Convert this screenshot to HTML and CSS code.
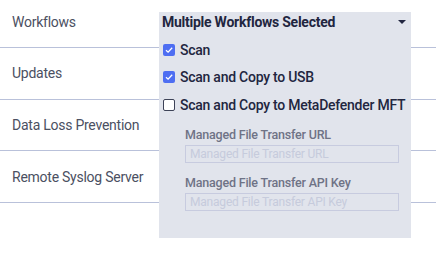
FILE: index.html
```html
<!DOCTYPE html>
<html>
<head>
<meta charset="utf-8">
<link rel="stylesheet" href="styles.css">
</head>
<body>
<div class="page">
  <div class="rows">
    <div class="row row-first">Workflows</div>
    <div class="row">Updates</div>
    <div class="row">Data Loss Prevention</div>
    <div class="row">Remote Syslog Server</div>
  </div>
  <div class="menu">
    <div class="menu-head">
      <span>Multiple Workflows Selected</span>
      <span class="caret"></span>
    </div>
    <div class="opts">
      <label class="opt"><span class="box checked"><svg viewBox="0 0 12 12" width="12" height="12"><path d="M3 6.2 L5.1 8.2 L9.2 3.8" fill="none" stroke="#fff" stroke-width="1.3"/></svg></span>Scan</label>
      <label class="opt"><span class="box checked"><svg viewBox="0 0 12 12" width="12" height="12"><path d="M3 6.2 L5.1 8.2 L9.2 3.8" fill="none" stroke="#fff" stroke-width="1.3"/></svg></span>Scan and Copy to USB</label>
      <label class="opt"><span class="box"></span>Scan and Copy to MetaDefender MFT</label>
    </div>
    <div class="fields">
      <div class="field">
        <div class="field-label">Managed File Transfer URL</div>
        <div class="input">Managed File Transfer URL</div>
      </div>
      <div class="field">
        <div class="field-label">Managed File Transfer API Key</div>
        <div class="input">Managed File Transfer API Key</div>
      </div>
    </div>
  </div>
</div>
</body>
</html>
```
FILE: styles.css
```css
html, body {
  margin: 0;
  padding: 0;
  background: #ffffff;
}
body {
  font-family: Roboto, "Noto Sans", sans-serif;
  width: 436px;
  height: 265px;
  overflow: hidden;
}
.page {
  position: relative;
  width: 436px;
  height: 265px;
}
.rows {
  display: flex;
  flex-direction: column;
}
.row {
  height: 50.7px;
  display: flex;
  align-items: center;
  padding-left: 12px;
  border-bottom: 1px solid #b9c1da;
  font-size: 14px;
  color: #4b5062;
  letter-spacing: -0.25px;
}
.row-first {
  box-sizing: border-box;
  height: 48px;
  padding-bottom: 3px;
}
.menu {
  position: absolute;
  left: 159px;
  top: 12px;
  width: 252px;
  height: 226px;
  background: #e1e4ec;
}
.menu-head {
  display: flex;
  align-items: center;
  justify-content: space-between;
  height: 20px;
  padding: 0 5px 0 3px;
  font-weight: 700;
  font-size: 14px;
  color: #222640;
  letter-spacing: -0.25px;
}
.caret {
  width: 0;
  height: 0;
  border-left: 4px solid transparent;
  border-right: 4px solid transparent;
  border-top: 4px solid #222640;
}
.opts {
  padding-top: 4px;
  display: flex;
  flex-direction: column;
}
.opt {
  display: flex;
  align-items: center;
  height: 27.5px;
  padding-left: 4px;
  gap: 5px;
  font-size: 14px;
  font-weight: 500;
  color: #222640;
  letter-spacing: -0.25px;
}
.box {
  width: 12px;
  height: 12px;
  box-sizing: border-box;
  border: 1px solid #3d4257;
  border-radius: 2px;
  background: #fff;
  display: flex;
}
.box.checked {
  border: none;
  background: #4e6ef2;
}
.fields {
  padding: 8px 12px 0 26px;
  display: flex;
  flex-direction: column;
  gap: 12px;
}
.field {
  display: flex;
  flex-direction: column;
  gap: 3px;
}
.field-label {
  font-size: 12.5px;
  font-weight: 500;
  color: #6f7386;
  letter-spacing: -0.2px;
}
.input {
  height: 18px;
  box-sizing: border-box;
  border: 1px solid #c7cbdf;
  padding-left: 4px;
  font-size: 12px;
  line-height: 16px;
  color: #c6cbdc;
  letter-spacing: -0.2px;
}
```
